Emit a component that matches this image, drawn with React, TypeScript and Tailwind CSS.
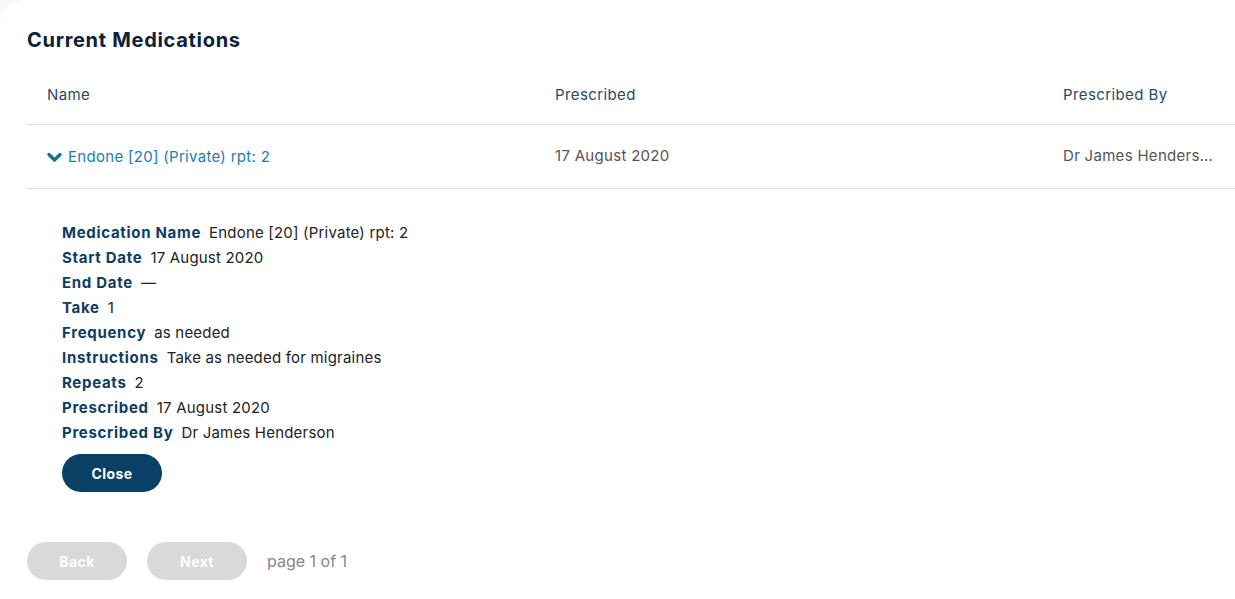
import React from "react";

const details: [string, string][] = [
  ["Medication Name", "Endone [20] (Private) rpt: 2"],
  ["Start Date", "17 August 2020"],
  ["End Date", "—"],
  ["Take", "1"],
  ["Frequency", "as needed"],
  ["Instructions", "Take as needed for migraines"],
  ["Repeats", "2"],
  ["Prescribed", "17 August 2020"],
  ["Prescribed By", "Dr James Henderson"],
];

export default function App() {
  return (
    <div
      className="min-h-[599px] w-full bg-[#f7f7f7]"
      style={{ fontFamily: "Inter, 'Open Sans', sans-serif" }}
    >
      <div className="min-h-[599px] bg-white rounded-tl-[24px] pl-[27px] pt-[28px]">
        <h2 className="text-[20px] leading-[24px] font-bold text-[#0b2137] tracking-[0.7px]">Current Medications</h2>

        <div className="mt-[11px]">
          <div className="grid grid-cols-[508px_508px_192px] border-b border-[#dddddd] h-[62px] items-center pt-[4px] text-[15px] text-[#2d4a62] tracking-[0.4px]">
            <div className="px-5">Name</div>
            <div className="px-5">Prescribed</div>
            <div className="px-5">Prescribed By</div>
          </div>
          <div className="grid grid-cols-[508px_508px_192px] border-b border-[#dddddd] h-[64px] items-center text-[15px] tracking-[0.3px]">
            <div className="px-5 flex items-center gap-[6px] text-[#1b7fa6] pt-[1px]">
              <svg width="15" height="11" viewBox="0 0 15 11" className="shrink-0">
                <path d="M2 2.5 L7.5 8 L13 2.5" fill="none" stroke="#17708f" strokeWidth="3.2" strokeLinecap="round" strokeLinejoin="round" />
              </svg>
              <span>Endone [20] (Private) rpt: 2</span>
            </div>
            <div className="px-5 text-[#555555]">17 August 2020</div>
            <div className="px-5 text-[#555555] truncate">Dr James Henderson</div>
          </div>

          <div className="pl-[35px] pt-[31px]">
            <div className="flex flex-col">
              {details.map(([k, v]) => (
                <div key={k} className="h-[25px] leading-[25px] text-[15px] flex">
                  <span className="font-bold text-[#0e3d63] tracking-[0.7px]">{k}</span>
                  <span className="ml-[8px] text-[#222222] tracking-[0.2px]">{v}</span>
                </div>
              ))}
            </div>
            <button className="mt-[9px] w-[100px] h-[38px] rounded-full bg-[#0a3f66] text-white text-[14px] font-bold tracking-[0.4px]">
              Close
            </button>
          </div>

          <div className="flex items-center mt-[50px] gap-5">
            <button className="w-[100px] h-[38px] rounded-full bg-[#d9d9d9] text-white text-[14px] font-bold tracking-[0.4px]">Back</button>
            <button className="w-[100px] h-[38px] rounded-full bg-[#d9d9d9] text-white text-[14px] font-bold tracking-[0.4px]">Next</button>
            <span className="text-[16px] text-[#888888]">page 1 of 1</span>
          </div>
        </div>
      </div>
    </div>
  );
}
